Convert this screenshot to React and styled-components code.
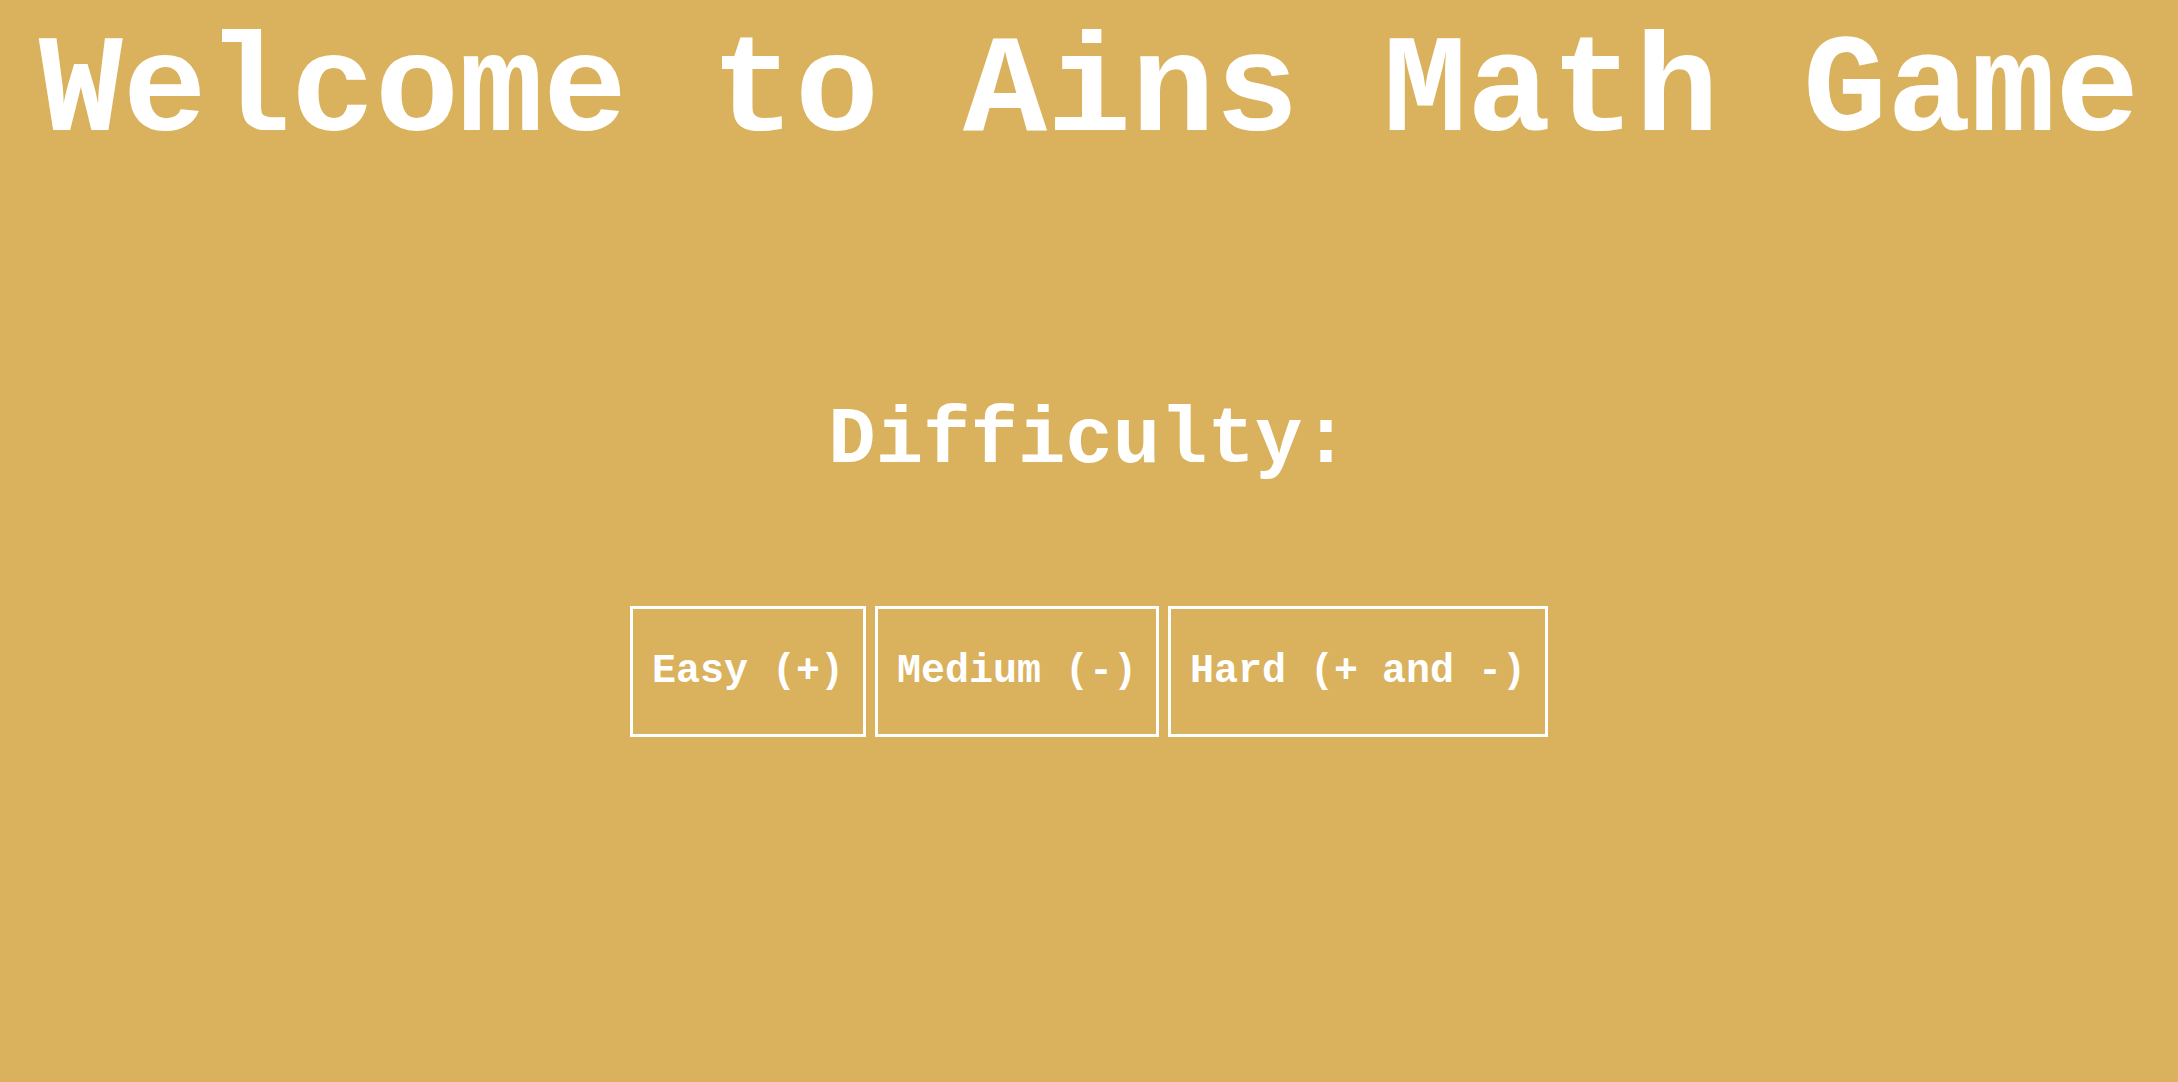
import React from 'react';
import styled, { createGlobalStyle } from 'styled-components';

const GlobalStyle = createGlobalStyle`
  html, body {
    margin: 0;
    padding: 0;
    background-color: #dab15d;
  }
  body {
    font-family: "Liberation Mono", "Courier New", monospace;
    color: #ffffff;
  }
`;

const Page = styled.div`
  min-height: 1082px;
  display: flex;
  flex-direction: column;
  align-items: center;
  background-color: #dab15d;
`;

const Title = styled.h1`
  margin: 13px 0 0;
  font-size: 140px;
  font-weight: 700;
  line-height: 159px;
  white-space: nowrap;
  text-align: center;
`;

const Label = styled.h2`
  margin: 224px 0 0;
  font-size: 79px;
  font-weight: 700;
  line-height: 90px;
`;

const ButtonRow = styled.div`
  margin-top: 120px;
  display: flex;
  gap: 9px;
`;

const LevelButton = styled.button`
  font-family: "Liberation Mono", "Courier New", monospace;
  font-size: 40px;
  font-weight: 700;
  line-height: 45px;
  color: #ffffff;
  background: transparent;
  border: 3px solid #ffffff;
  padding: 40px 19px;
  cursor: pointer;
  white-space: nowrap;

  &:hover {
    background-color: rgba(255, 255, 255, 0.1);
  }
`;

const levels = ['Easy (+)', 'Medium (-)', 'Hard (+ and -)'];

export default function App() {
  return (
    <Page>
      <GlobalStyle />
      <Title>Welcome to Ains Math Game</Title>
      <Label>Difficulty:</Label>
      <ButtonRow>
        {levels.map((level) => (
          <LevelButton key={level}>{level}</LevelButton>
        ))}
      </ButtonRow>
    </Page>
  );
}
